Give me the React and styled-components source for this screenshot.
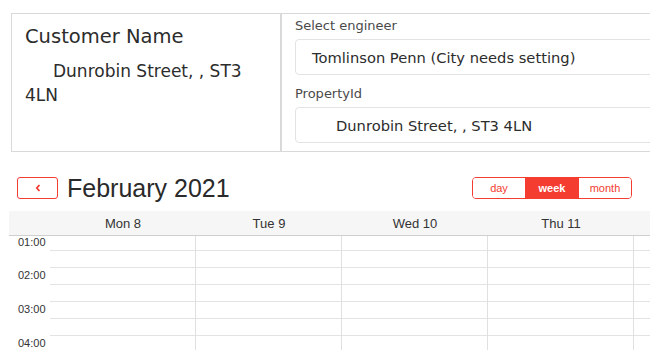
import React from "react";
import styled, { createGlobalStyle } from "styled-components";

const RED = "#f43c30";
const TOP_FONT = `"DejaVu Sans", "Noto Sans", sans-serif`;
const CAL_FONT = `"Liberation Sans", Arial, sans-serif`;

const GlobalStyle = createGlobalStyle`
  html, body { margin: 0; padding: 0; background: #fff; }
  body { width: 650px; height: 350px; overflow: hidden; }
  * { box-sizing: border-box; }
`;

const Page = styled.div`
  width: 650px;
  height: 350px;
  padding: 13px 0 0 9px;
  overflow: hidden;
`;

const TopBox = styled.section`
  margin-left: 2px;
  width: 720px;
  height: 139px;
  border: 1px solid #d9d9d9;
  display: grid;
  grid-template-columns: 270px 1fr;
  font-family: ${TOP_FONT};
`;

const CustomerPanel = styled.div`
  border-right: 2px solid #d9d9d9;
  padding: 10px 12px 0 13px;
  color: #2c2c2c;
`;

const CustomerName = styled.div`
  font-size: 19.5px;
  line-height: 26px;
`;

const Address = styled.div`
  margin-top: 9px;
  font-size: 17px;
  line-height: 24px;
  text-indent: 28px;
`;

const FormPanel = styled.div`
  padding: 3px 0 0 13px;
  display: flex;
  flex-direction: column;
`;

const Label = styled.div`
  font-size: 13px;
  line-height: 18px;
  color: #4a4a4a;
  height: ${(p) => p.$h}px;
  padding-top: ${(p) => p.$pt || 0}px;
`;

const Field = styled.div`
  height: 36px;
  width: 400px;
  border: 1px solid #e3e3e3;
  border-radius: 4px;
  display: flex;
  align-items: center;
  padding-left: ${(p) => p.$indent}px;
  font-size: 14.7px;
  color: #2c2c2c;
  white-space: nowrap;
`;

const Calendar = styled.div`
  margin-top: 21px;
  width: 641px;
  overflow: hidden;
  font-family: ${CAL_FONT};
  color: #333;
`;

const Toolbar = styled.div`
  height: 30px;
  display: flex;
  align-items: center;
  padding: 0 18px 0 8px;
`;

const NavButton = styled.button`
  width: 41px;
  height: 22px;
  border: 1px solid ${RED};
  border-radius: 3px;
  background: #fff;
  padding: 0;
  display: flex;
  align-items: center;
  justify-content: center;
`;

const Title = styled.h2`
  margin: 0 0 0 9px;
  font-size: 25px;
  font-weight: 400;
  line-height: 30px;
  color: #2a2a2a;
  flex: 1;
`;

const ViewGroup = styled.div`
  display: flex;
  height: 22px;
  border: 1px solid ${RED};
  border-radius: 4px;
  overflow: hidden;
`;

const ViewButton = styled.button`
  width: ${(p) => p.$w}px;
  border: 0;
  padding: 0;
  font-family: ${CAL_FONT};
  font-size: 11px;
  font-weight: ${(p) => (p.$active ? 700 : 400)};
  background: ${(p) => (p.$active ? RED : "#fff")};
  color: ${(p) => (p.$active ? "#fff" : RED)};
`;

const Grid = styled.div`
  margin-top: 8px;
  display: grid;
  grid-template-columns: 41px repeat(5, 146px);
`;

const HeadCell = styled.div`
  height: 25px;
  background: #f6f6f6;
  border-bottom: 1px solid #cfcfcf;
  font-size: 13px;
  display: flex;
  align-items: center;
  justify-content: center;
`;

const Gutter = styled.div`
  display: flex;
  flex-direction: column;
  height: 116px;
  overflow: hidden;
`;

const HourLabel = styled.div`
  height: ${(p) => (p.$first ? 32 : 34)}px;
  flex-shrink: 0;
  padding: ${(p) => (p.$first ? 0 : 1)}px 0 0 9px;
  font-size: 11px;
  line-height: 12px;
  color: #333;
`;

const DayColumn = styled.div`
  border-right: 1px solid #e0e0e0;
  display: flex;
  flex-direction: column;
  height: 116px;
  overflow: hidden;
`;

const Slot = styled.div`
  height: ${(p) => (p.$first ? 15 : 17)}px;
  flex-shrink: 0;
  border-bottom: 1px solid #e3e3e3;
`;

const Chevron = () => (
  <svg width="6" height="8" viewBox="0 0 6 8" aria-hidden="true">
    <path d="M4.5 1 L1.8 4 L4.5 7" fill="none" stroke={RED} strokeWidth="1.8" />
  </svg>
);

const days = ["Mon 8", "Tue 9", "Wed 10", "Thu 11", ""];
const hours = ["01:00", "02:00", "03:00", "04:00"];

export default function App() {
  return (
    <>
      <GlobalStyle />
      <Page>
        <TopBox>
          <CustomerPanel>
            <CustomerName>Customer Name</CustomerName>
            <Address>Dunrobin Street, , ST3 4LN</Address>
          </CustomerPanel>
          <FormPanel>
            <Label $h={22}>Select engineer</Label>
            <Field $indent={16}>Tomlinson Penn (City needs setting)</Field>
            <Label $h={32} $pt={10}>PropertyId</Label>
            <Field $indent={40}>Dunrobin Street, , ST3 4LN</Field>
          </FormPanel>
        </TopBox>

        <Calendar>
          <Toolbar>
            <NavButton aria-label="previous">
              <Chevron />
            </NavButton>
            <Title>February 2021</Title>
            <ViewGroup>
              <ViewButton $w={52}>day</ViewButton>
              <ViewButton $w={54} $active>week</ViewButton>
              <ViewButton $w={52}>month</ViewButton>
            </ViewGroup>
          </Toolbar>
          <Grid>
            <HeadCell />
            {days.map((d, i) => (
              <HeadCell key={i}>{d}</HeadCell>
            ))}
            <Gutter>
              {hours.map((h, i) => (
                <HourLabel key={h} $first={i === 0}>{h}</HourLabel>
              ))}
            </Gutter>
            {days.map((d, i) => (
              <DayColumn key={i}>
                {Array.from({ length: 8 }).map((_, j) => (
                  <Slot key={j} $first={j === 0} />
                ))}
              </DayColumn>
            ))}
          </Grid>
        </Calendar>
      </Page>
    </>
  );
}
